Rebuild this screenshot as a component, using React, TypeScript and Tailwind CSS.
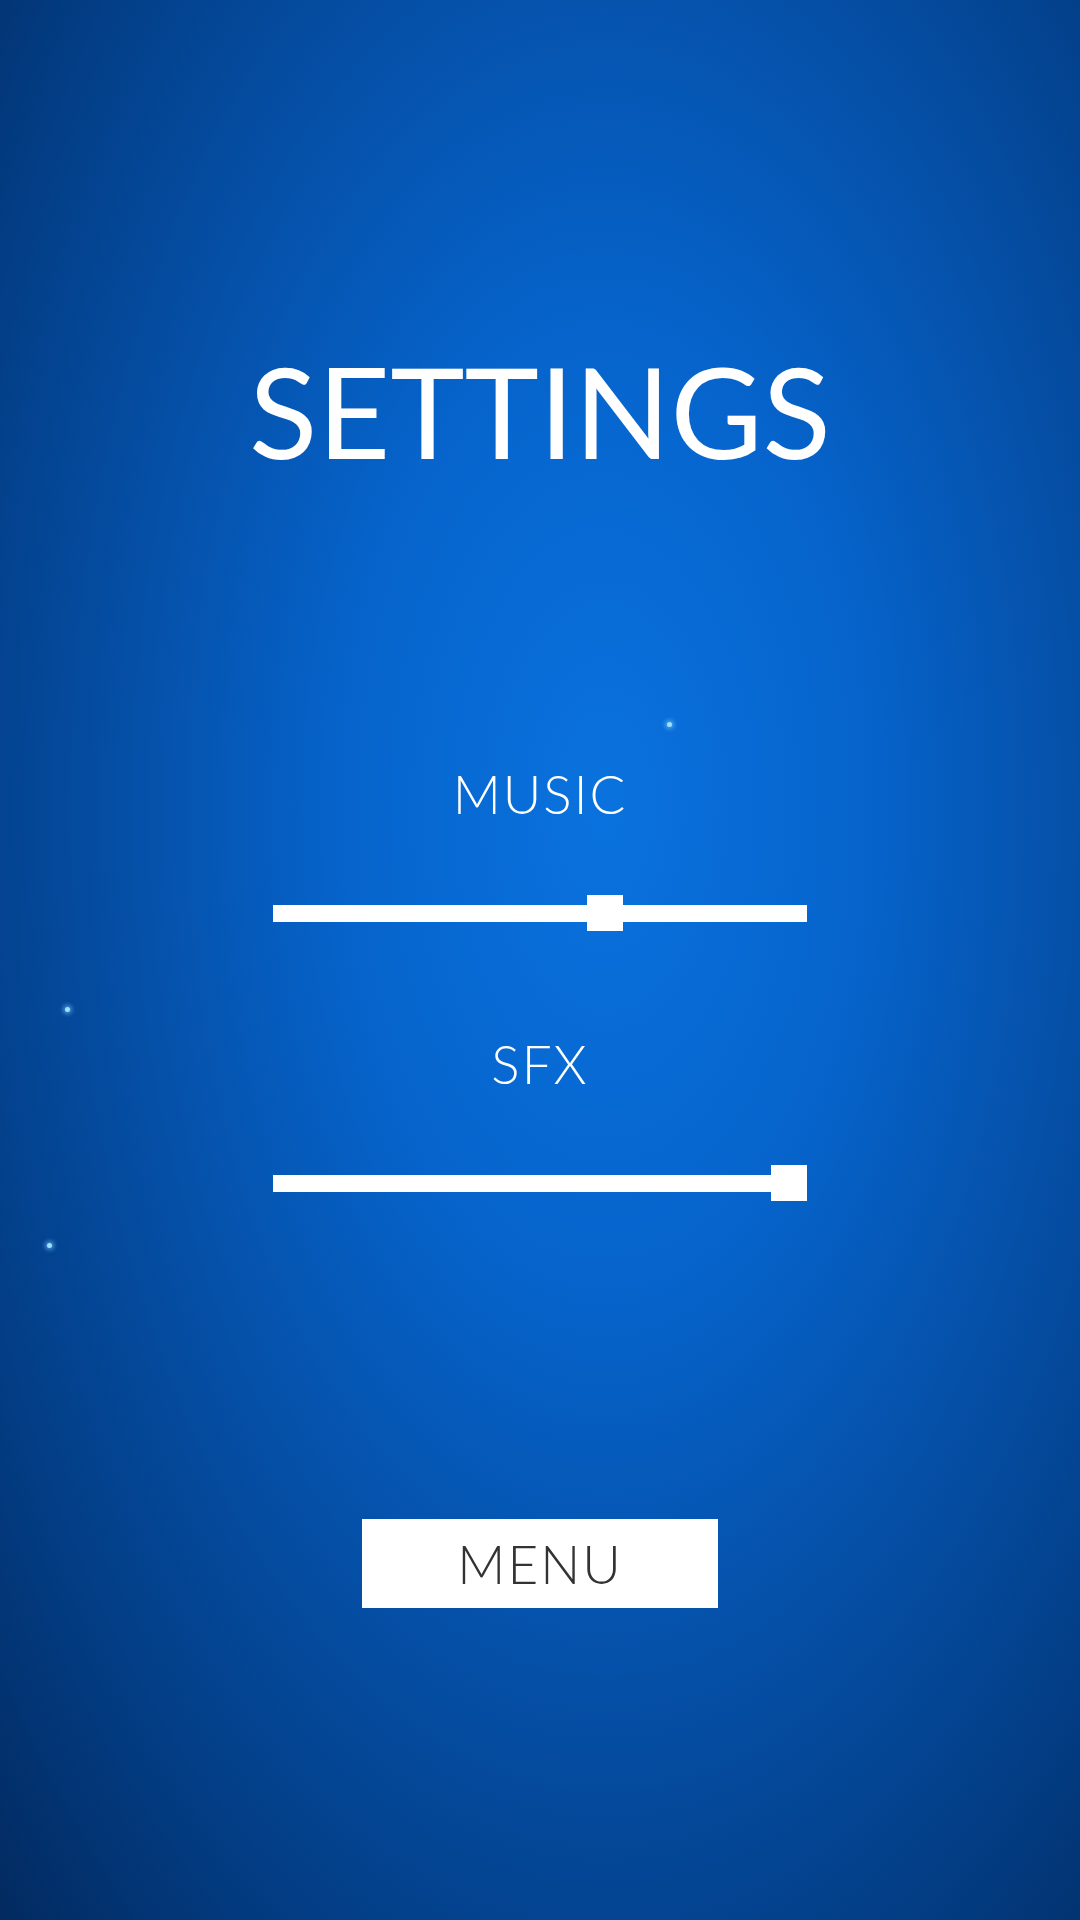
import React from "react";

const sliders = [
  { label: "MUSIC", value: 63 },
  { label: "SFX", value: 100 },
];

const stars = [
  { left: 667, top: 722 },
  { left: 65, top: 1007 },
  { left: 47, top: 1243 },
];

function Slider({ value }: { value: number }) {
  // thumb is 36px wide, track is 534px
  return (
    <div className="relative h-[36px] w-[534px] flex items-center">
      <div className="h-[17px] w-full bg-white" />
      <div
        className="absolute top-0 h-[36px] w-[36px] bg-white"
        style={{ left: `${(value / 100) * (534 - 36)}px` }}
      />
    </div>
  );
}

export default function App() {
  return (
    <div
      className="relative w-[1080px] h-[1920px] overflow-hidden bg-[radial-gradient(ellipse_at_56%_42%,#0a72de_0%,#0664cc_30%,#0550a8_55%,#03408a_75%,#022a60_100%)] text-white"
      style={{ fontFamily: "Lato, 'Noto Sans', sans-serif" }}
    >
      {/* Background stars */}
      {stars.map((s, i) => (
        <div
          key={i}
          className="absolute h-[5px] w-[5px] rounded-full bg-[#9fe0ff] shadow-[0_0_4px_2px_rgba(120,200,255,0.6)]"
          style={{ left: s.left, top: s.top }}
        />
      ))}

      <div className="relative flex flex-col items-center pt-[348px]">
        <h1 className="text-[126px] leading-none font-normal tracking-[0px]">SETTINGS</h1>

        <div className="mt-[293px] flex flex-col items-center">
          {sliders.map((s, i) => (
            <div key={s.label} className={`flex flex-col items-center ${i > 0 ? "mt-[106px]" : ""}`}>
              <div className="text-[53px] leading-none font-light tracking-[2px]">{s.label}</div>
              <div className="mt-[75px]">
                <Slider value={s.value} />
              </div>
            </div>
          ))}
        </div>

        <button className="mt-[318px] h-[89px] w-[356px] bg-white text-[#333333] text-[53px] font-light tracking-[2px] leading-none flex items-center justify-center">
          MENU
        </button>
      </div>
    </div>
  );
}
